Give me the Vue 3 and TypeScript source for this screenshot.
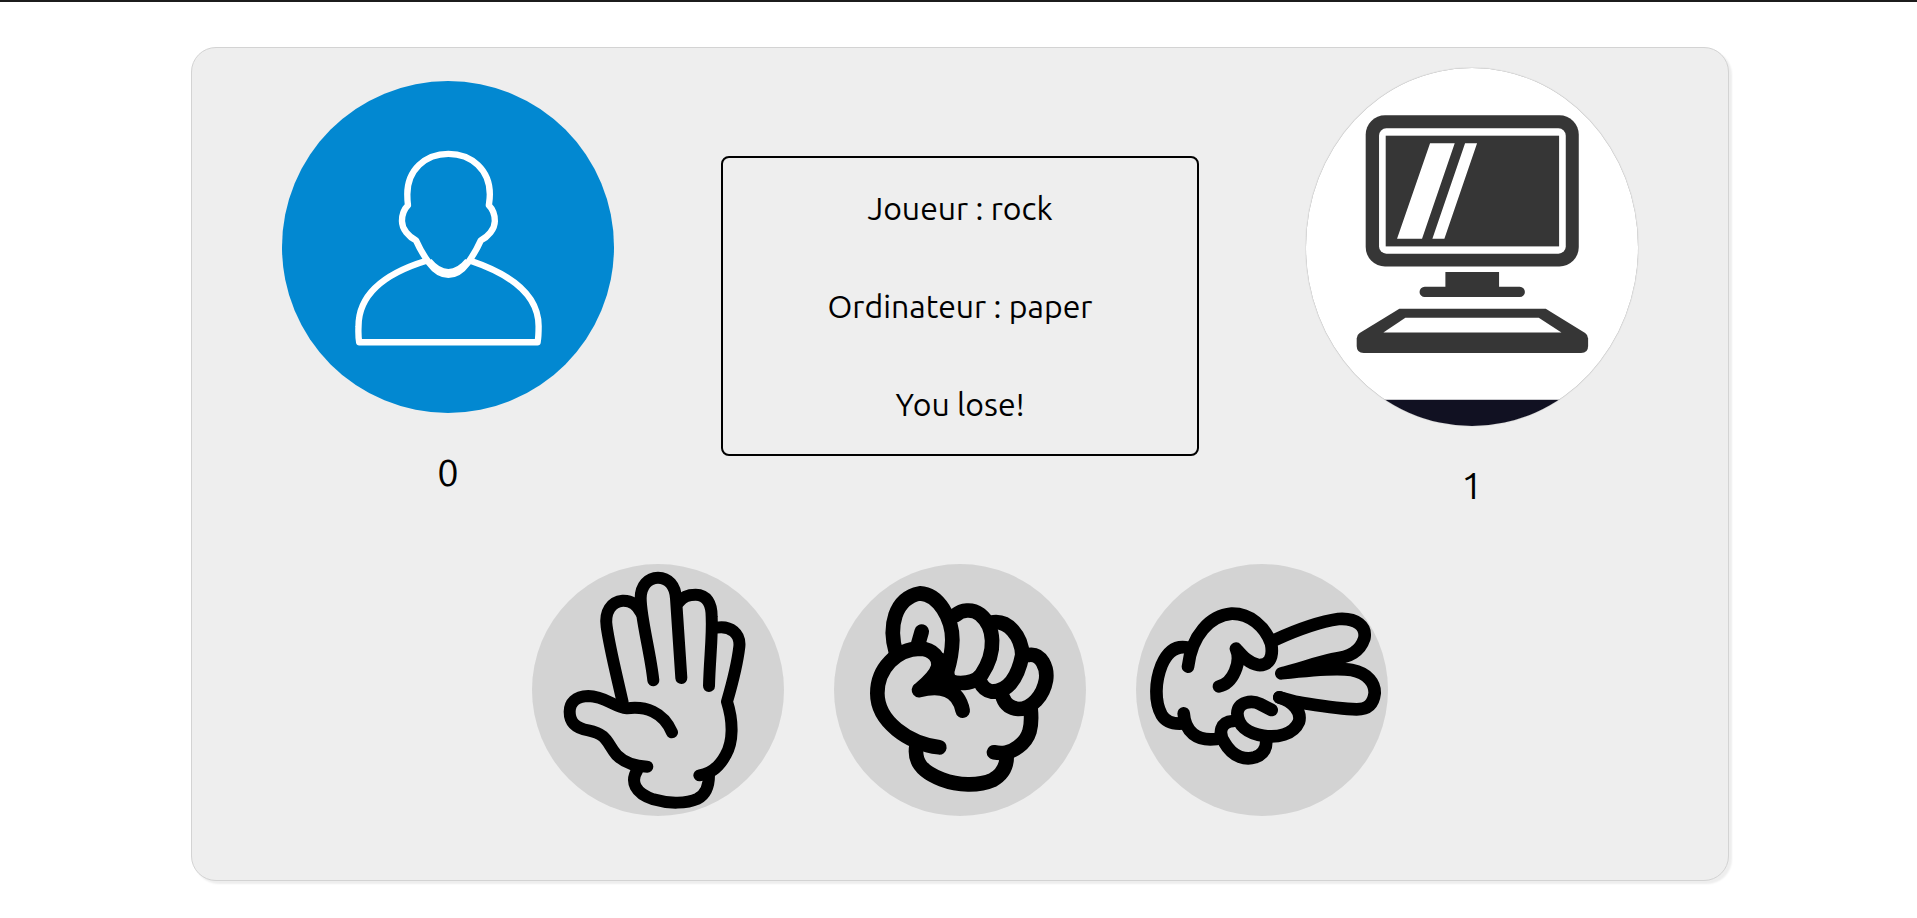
<script setup lang="ts">
import { computed, ref } from 'vue'

type Move = 'paper' | 'rock' | 'scissors'

interface Hand {
  move: Move
  viewBox: string
  stroke: number
  lines: string[]
  fill?: string
}

const hands: Hand[] = [
  {
    move: 'paper',
    viewBox: '36 27 756 756',
    stroke: 36,
    lines: [
      'M308 442C290 360 270 285 260 215C253 170 274 140 308 137C335 136 352 150 362 172',
      'M400 376C391 290 362 190 362 130C362 92 385 68 414 68C445 68 466 92 468 130L484 369',
      'M478 140C488 125 508 119 527 119C560 119 575 145 575 185C578 245 569 310 567 393',
      'M588 218C632 210 662 236 658 275C651 335 637 385 621 440C640 500 640 560 617 600C598 635 570 657 538 661',
      'M456 532C430 470 375 452 320 460C285 458 255 423 205 423C165 424 149 445 149 470C149 500 165 519 205 526C265 538 260 565 290 600C315 625 350 634 382 635',
      'M352 645C330 680 345 715 400 733C450 748 500 745 533 731C560 717 567 690 567 660',
    ],
  },
  {
    move: 'rock',
    viewBox: '27 27 756 756',
    stroke: 44,
    lines: [
      'M213 293C190 215 208 130 285 115C340 117 382 190 382 255C381 300 372 330 366 350',
      'M290 230L278 272',
      'M392 180C410 165 440 160 465 178C510 215 515 290 470 358C450 385 415 387 380 382',
      'M498 203C550 192 590 245 592 300C580 360 555 410 500 410C482 406 472 395 466 382',
      'M610 300C650 293 668 340 663 375C655 422 620 462 580 462C560 460 542 450 534 428',
      'M617 462C622 515 615 550 580 575C553 596 530 596 507 592',
      'M275 570C265 620 290 650 350 673C400 692 460 694 503 675C533 658 545 635 545 605',
      'M343 577C250 565 157 500 157 415C157 340 215 282 285 281C325 283 345 310 340 335C332 365 300 390 282 405C345 390 400 400 413 467',
    ],
    fill: 'M340 290L372 300L390 360L440 385L400 410L300 410Z',
  },
  {
    move: 'scissors',
    viewBox: '18 27 756 756',
    stroke: 38,
    lines: [
      'M175 278C138 270 112 290 95 330C75 380 73 440 95 480C110 505 140 508 165 505',
      'M161 475C165 530 200 560 260 552',
      'M174 335C185 240 240 182 305 176C360 175 405 215 423 265C432 310 415 332 385 330C355 325 335 300 318 281C335 320 310 385 267 394',
      'M436 254C500 225 570 200 625 192C680 188 710 215 703 250C690 290 660 305 610 312C560 322 500 345 454 355C540 345 620 338 665 345C715 355 735 385 734 415C730 450 710 463 680 463C620 461 560 450 500 441L448 427',
      'M448 427C490 440 515 470 507 500C490 540 440 548 400 542C350 534 323 510 322 475C324 440 365 435 390 447L425 465',
      'M310 498C270 500 265 535 283 562C310 610 350 615 375 607C400 598 410 580 409 555',
    ],
  },
]

const playerScore = ref(0)
const computerScore = ref(1)
const playerMove = ref<Move>('rock')
const computerMove = ref<Move>('paper')

const beats: Record<Move, Move> = { paper: 'rock', rock: 'scissors', scissors: 'paper' }

const verdict = computed(() => {
  if (playerMove.value === computerMove.value) return 'Draw!'
  return beats[playerMove.value] === computerMove.value ? 'You win!' : 'You lose!'
})

function play(move: Move) {
  playerMove.value = move
  computerMove.value = hands[Math.floor(Math.random() * hands.length)].move
  if (beats[move] === computerMove.value) playerScore.value++
  else if (beats[computerMove.value] === move) computerScore.value++
}
</script>

<template>
  <main class="page">
    <section class="card">
      <div class="board">
        <figure class="side">
          <svg class="avatar player" viewBox="305 241 996 996" role="img" aria-label="Joueur">
            <g class="person">
              <path d="M803 459C733 459 680 508 680 580C680 595 681 605 682 613C667 628 664 645 664 660C664 685 685 708 706 718C718 745 730 765 745 785C765 812 782 821 803 821C824 821 841 812 861 785C876 765 888 745 900 718C921 708 942 685 942 660C942 645 939 628 924 613C925 605 927 595 927 580C927 508 873 459 803 459Z" />
              <path d="M745 780C765 805 782 813 803 813C824 813 841 805 861 780" />
              <path d="M737 779C610 818 534 880 534 975C533 995 533 1005 536 1023H1070C1073 1005 1073 995 1073 975C1073 880 985 818 869 779" />
            </g>
          </svg>
          <figcaption class="score">{{ playerScore }}</figcaption>
        </figure>

        <div class="result" aria-live="polite">
          <p>Joueur : {{ playerMove }}</p>
          <p>Ordinateur : {{ computerMove }}</p>
          <p>{{ verdict }}</p>
        </div>

        <figure class="side">
          <svg class="avatar computer" viewBox="49 51 998 1074" role="img" aria-label="Ordinateur">
            <rect x="49" y="1046" width="998" height="80" fill="#111122" />
            <g fill="#363636">
              <rect x="228" y="193" width="639" height="453" rx="58" />
              <rect x="268" y="232" width="560" height="376" rx="22" fill="#fff" />
              <rect x="288" y="254" width="520" height="332" />
              <path d="M421 277H495L397 563H322ZM526 277H562L464 563H428Z" fill="#fff" />
              <path d="M467 663H628V707H690A15 15 0 0 1 690 738H405A15 15 0 0 1 405 707H467Z" />
              <path d="M329 773H768L886 846Q895 852 895 862V885Q895 906 874 906H222Q201 906 201 885V862Q201 852 210 846Z" />
              <path d="M347 800H747L815 844H281Z" fill="#fff" />
            </g>
          </svg>
          <figcaption class="score">{{ computerScore }}</figcaption>
        </figure>
      </div>

      <div class="choices">
        <button
          v-for="hand in hands"
          :key="hand.move"
          class="choice"
          type="button"
          :aria-label="hand.move"
          @click="play(hand.move)"
        >
          <svg class="hand" :viewBox="hand.viewBox" :stroke-width="hand.stroke" aria-hidden="true">
            <path v-for="line in hand.lines" :key="line" :d="line" />
            <path v-if="hand.fill" class="solid" :d="hand.fill" />
          </svg>
        </button>
      </div>
    </section>
  </main>
</template>

<style>
body {
  margin: 0;
  background: #fff;
}
</style>

<style scoped>
.page {
  border-top: 2px solid #1c1c1c;
  padding: 45px 188px 34px 191px;
  font-family: Ubuntu, "Noto Sans", "Open Sans", sans-serif;
  color: #000;
}

.card {
  border: 1px solid #d3d3d3;
  border-radius: 25px;
  background: #eee;
  box-shadow: 3px 3px 2px #eee;
  padding: 20px 0 64px;
}

.board {
  display: grid;
  grid-template-columns: repeat(3, 1fr);
  align-items: center;
}

.side {
  margin: 0;
  display: flex;
  flex-direction: column;
  align-items: center;
}

.avatar {
  display: block;
  width: 65%;
  border-radius: 50%;
}

.player {
  background: #0288d1;
}

.computer {
  background: #fff;
  box-shadow: 0 0 1px #777;
}

.person {
  fill: none;
  stroke: #fff;
  stroke-width: 19;
  stroke-linejoin: round;
}

.score {
  margin: 38px 0;
  font-size: 38px;
  line-height: 42px;
}

.result {
  margin: 0 17px;
  padding: 1px 0;
  border: 2px solid #000;
  border-radius: 8px;
  text-align: center;
  font-size: 32px;
  line-height: 98px;
}

.result p {
  margin: 0;
}

.choices {
  display: flex;
  justify-content: center;
  gap: 50px;
  margin-top: 20px;
}

.choice {
  width: 252px;
  height: 252px;
  padding: 0;
  border: 0;
  border-radius: 50%;
  background: #d3d3d3;
  overflow: hidden;
  cursor: pointer;
}

.hand {
  display: block;
  width: 100%;
  height: 100%;
  fill: none;
  stroke: #000;
  stroke-linecap: round;
  stroke-linejoin: round;
}

.solid {
  fill: #000;
  stroke: none;
}
</style>
